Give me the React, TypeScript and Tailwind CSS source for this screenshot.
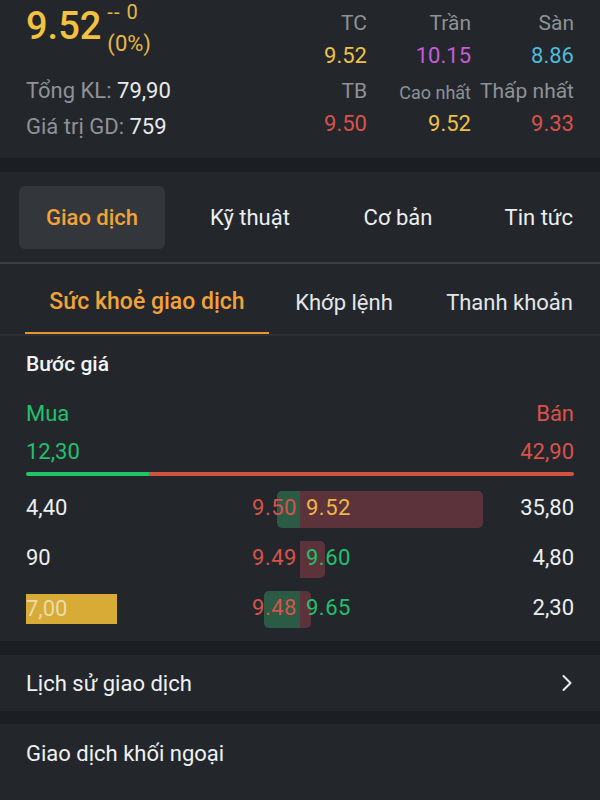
import { ChevronRight } from "lucide-react";

const font = { fontFamily: "Roboto, 'Noto Sans', sans-serif" };

interface Level {
  bidVol: string;
  bid: string;
  ask: string;
  askVol: string;
  askColor: string;
  bidBar: number;
  askBar: number;
  highlight?: boolean;
}

const levels: Level[] = [
  { bidVol: "4,40", bid: "9.50", ask: "9.52", askVol: "35,80", askColor: "text-[#efb648]", bidBar: 23, askBar: 183 },
  { bidVol: "90", bid: "9.49", ask: "9.60", askVol: "4,80", askColor: "text-[#22c06c]", bidBar: 0, askBar: 25 },
  { bidVol: "7,00", bid: "9.48", ask: "9.65", askVol: "2,30", askColor: "text-[#22c06c]", bidBar: 36, askBar: 11, highlight: true },
];

function Stat({ label, value, color, small }: { label: string; value: string; color: string; small?: boolean }) {
  return (
    <div className="flex flex-col items-end">
      <div className={`h-[32px] flex items-center text-[#8e9298] whitespace-nowrap ${small ? "text-[18px]" : "text-[21px]"}`}>
        {label}
      </div>
      <div className={`h-[31px] flex items-center text-[22px] ${color}`}>{value}</div>
    </div>
  );
}

export default function App() {
  return (
    <div className="w-[600px] h-[800px] overflow-hidden bg-[#1b1e22] text-white" style={font}>
      {/* header */}
      <div className="h-[158px] bg-[#23272c] px-[26px] flex justify-between items-start">
        <div className="flex flex-col">
          <div className="flex items-start h-[71px]">
            <div className="text-[38px] font-medium text-[#f3c241] leading-none mt-[7px]">9.52</div>
            <div className="ml-[6px] flex flex-col text-[#e6b845]">
              <div className="text-[20px] leading-none mt-[2px] tracking-[1px]">-- 0</div>
              <div className="text-[22px] leading-none mt-[11px]">(0%)</div>
            </div>
          </div>
          <div className="h-[38px] flex items-center text-[22px]">
            <span className="text-[#8e9298]">Tổng KL:&nbsp;</span>
            <span className="text-[#e9eaec]">79,90</span>
          </div>
          <div className="h-[34px] flex items-center text-[22px]">
            <span className="text-[#8e9298]">Giá trị GD:&nbsp;</span>
            <span className="text-[#e9eaec]">759</span>
          </div>
        </div>
        <div className="grid grid-cols-[104px_104px_103px] content-start gap-y-[5px] pt-[8px]">
          <Stat label="TC" value="9.52" color="text-[#efc04a]" />
          <Stat label="Trần" value="10.15" color="text-[#c65ad8]" />
          <Stat label="Sàn" value="8.86" color="text-[#4fb9d9]" />
          <Stat label="TB" value="9.50" color="text-[#d9524a]" />
          <Stat label="Cao nhất" value="9.52" color="text-[#efc04a]" small />
          <Stat label="Thấp nhất" value="9.33" color="text-[#d9524a]" />
        </div>
      </div>

      <div className="h-[14px]" />

      {/* main tabs */}
      <div className="bg-[#23272c]">
        <div className="h-[90px] flex items-center pl-[19px] text-[22px]">
          <div className="w-[146px] h-[63px] rounded-[6px] bg-[#33373c] flex items-center justify-center text-[#f2a23a] font-medium">
            Giao dịch
          </div>
          <div className="w-[170px] text-center text-[#eceef0]">Kỹ thuật</div>
          <div className="w-[126px] text-center text-[#eceef0]">Cơ bản</div>
          <div className="flex-1 text-right pr-[27px] text-[#eceef0]">Tin tức</div>
        </div>
        <div className="h-[2px] bg-[#3a3f45]" />

        {/* sub tabs */}
        <div className="h-[70px] flex items-stretch text-[22px]">
          <div className="ml-[25px] w-[244px] flex flex-col">
            <div className="flex-1 flex items-center justify-center pt-[8px] text-[#f2a23a] font-medium text-[23px]">
              Sức khoẻ giao dịch
            </div>
            <div className="h-[2px] bg-[#e5952f]" />
          </div>
          <div className="w-[150px] flex items-center justify-center pt-[6px] text-[#e4e6e8]">Khớp lệnh</div>
          <div className="flex-1 flex items-center justify-end pt-[6px] pr-[27px] text-[#e4e6e8]">Thanh khoản</div>
        </div>
        <div className="h-[2px] bg-[#2d3136]" />

        {/* price step */}
        <div className="px-[26px] pb-[13px]">
          <div className="h-[58px] flex items-center text-[21px] font-medium text-[#f2f3f4]">Bước giá</div>
          <div className="h-[39px] flex items-center justify-between text-[22px]">
            <span className="text-[#22c06c]">Mua</span>
            <span className="text-[#d9524a]">Bán</span>
          </div>
          <div className="h-[36px] flex items-center justify-between text-[22px]">
            <span className="text-[#22c06c]">12,30</span>
            <span className="text-[#d9524a]">42,90</span>
          </div>
          <div className="mt-[3px] h-[4px] flex rounded-full overflow-hidden">
            <div className="w-[123px] bg-[#22c468]" />
            <div className="flex-1 bg-[#d2513f]" />
          </div>

          <div className="mt-[15px] flex flex-col gap-[13px]">
            {levels.map((l) => (
              <div key={l.bid} className="h-[37px] flex items-center text-[22px]">
                <div className="w-[160px] -mt-[4px]">
                  {l.highlight ? (
                    <div className="w-[91px] h-[30px] mt-[2px] bg-[#d8aa36] text-[#e9dcae] flex items-center">{l.bidVol}</div>
                  ) : (
                    <span className="text-[#eceef0]">{l.bidVol}</span>
                  )}
                </div>
                <div className="relative w-[114px] h-[37px] flex items-center justify-end">
                  <div
                    className="absolute right-0 top-0 h-[37px] bg-[#2b5b44] rounded-l-[5px]"
                    style={{ width: l.bidBar }}
                  />
                  <span className="relative text-[#d9524a] -mt-[4px] pr-[3px] tracking-[0.5px]">{l.bid}</span>
                </div>
                <div className="relative flex-1 h-[37px] flex items-center">
                  <div
                    className="absolute left-0 top-0 h-[37px] bg-[#5d333b] rounded-r-[5px]"
                    style={{ width: l.askBar }}
                  />
                  <span className={`relative pl-[6px] -mt-[4px] tracking-[0.5px] ${l.askColor}`}>{l.ask}</span>
                </div>
                <div className="text-[#eceef0] -mt-[4px]">{l.askVol}</div>
              </div>
            ))}
          </div>
        </div>
      </div>

      <div className="h-[14px]" />

      <div className="h-[56px] bg-[#23272c] px-[26px] flex items-center justify-between">
        <span className="text-[22px] text-[#f0f1f2]">Lịch sử giao dịch</span>
        <ChevronRight className="w-[28px] h-[28px] text-[#e8e9ea] -mr-[7px]" strokeWidth={1.75} />
      </div>

      <div className="h-[13px]" />

      <div className="h-[120px] bg-[#23272c] px-[26px]">
        <div className="h-[58px] flex items-center text-[22px] text-[#f0f1f2]">Giao dịch khối ngoại</div>
      </div>
    </div>
  );
}
